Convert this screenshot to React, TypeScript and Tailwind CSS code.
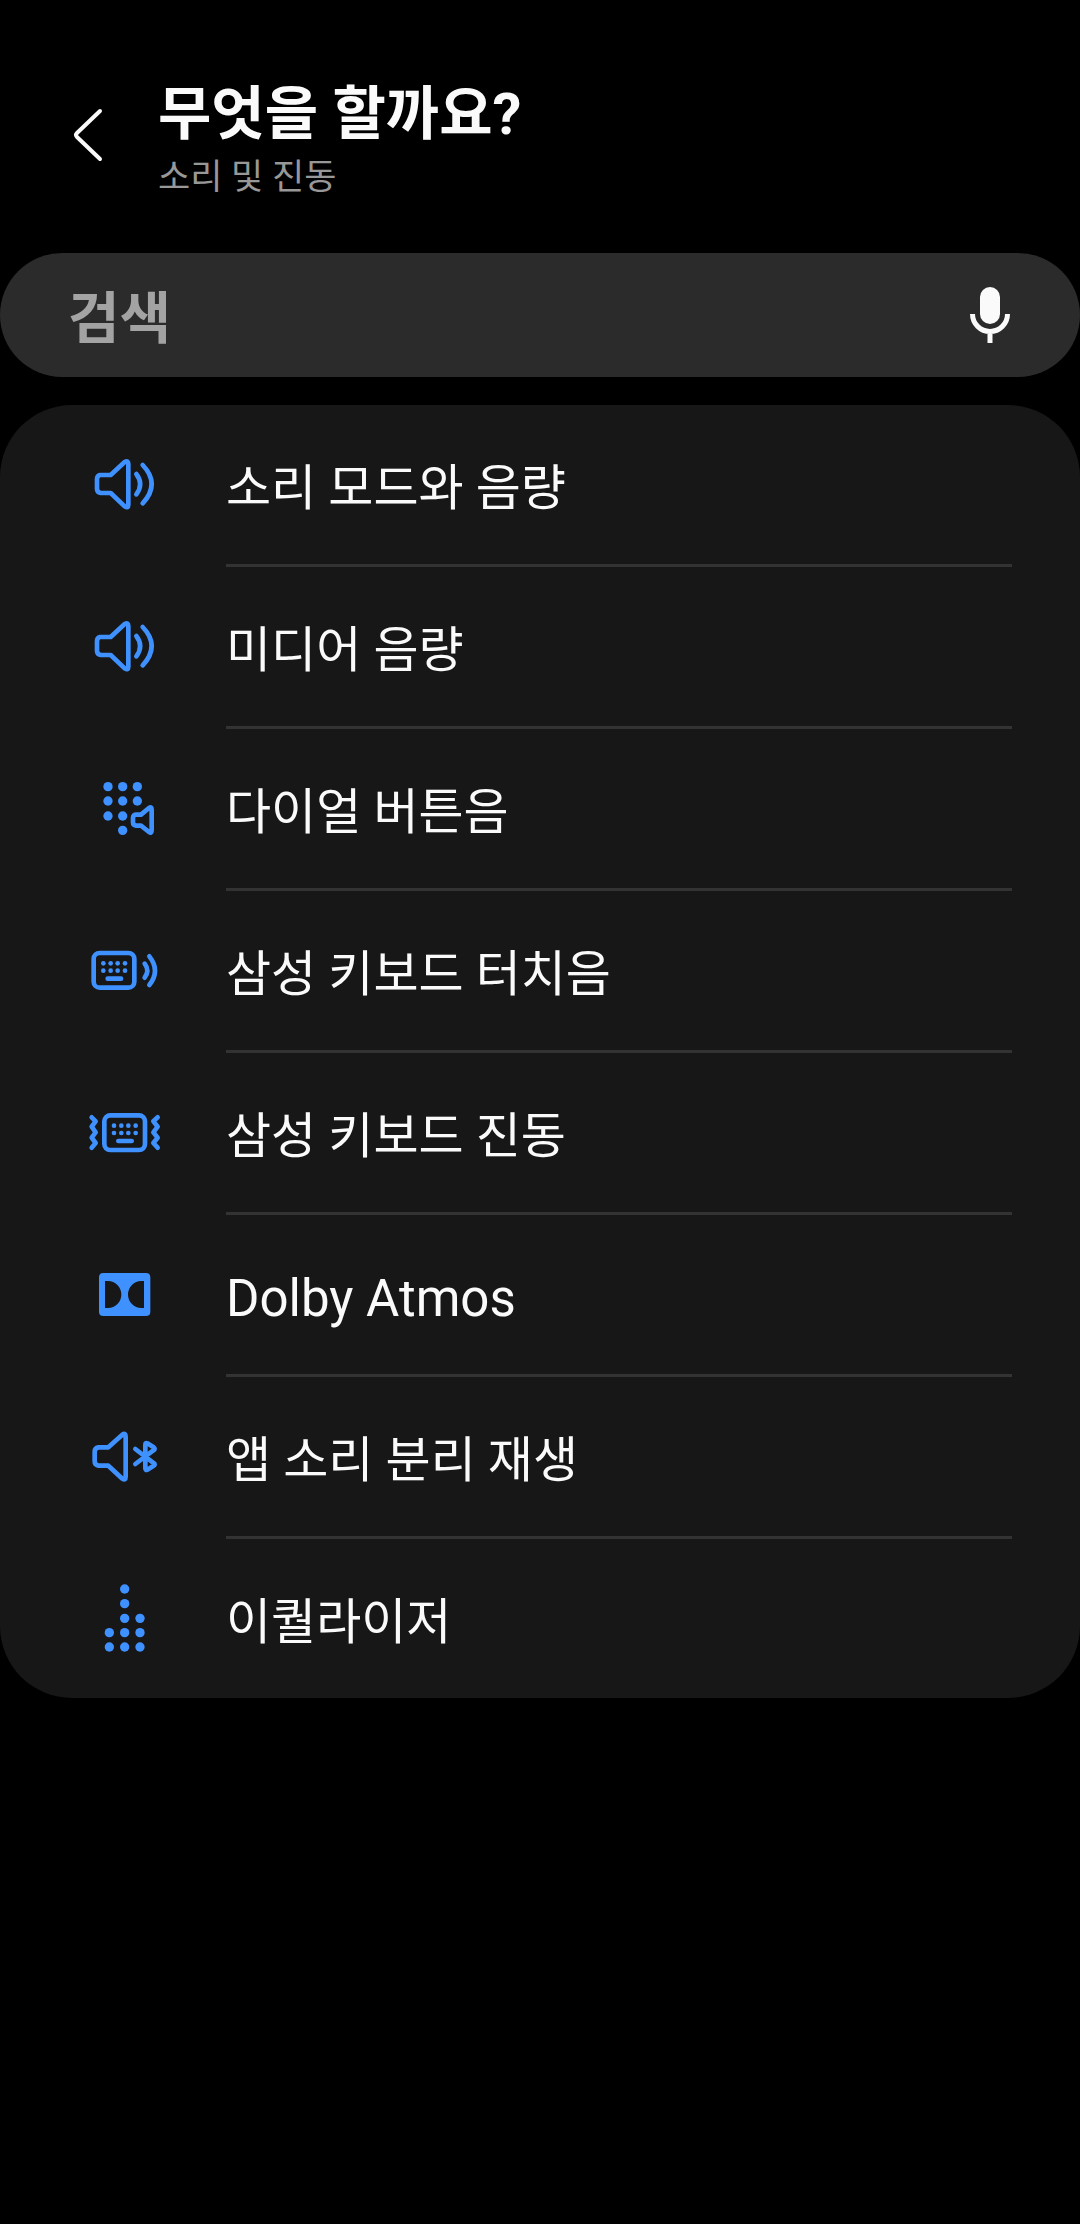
import React from "react";

interface IRow {
  label: string;
  icon: React.ReactNode;
  latin?: boolean;
}

interface IIconProps {
  viewBox: string;
  children: React.ReactNode;
}

function RowIcon({ viewBox, children }: IIconProps) {
  return (
    <svg
      viewBox={viewBox}
      className="h-[90px] w-[100px] text-[#3e91ff]"
      fill="none"
      stroke="currentColor"
      strokeWidth="14"
      strokeLinecap="round"
      strokeLinejoin="round"
      aria-hidden="true"
    >
      {children}
    </svg>
  );
}

function Dots({ points, r }: { points: number[][]; r: number }) {
  return (
    <g fill="currentColor" stroke="none">
      {points.map(([x, y]) => (
        <circle key={`${x}-${y}`} cx={x} cy={y} r={r} />
      ))}
    </g>
  );
}

function VolumeIcon() {
  return (
    <RowIcon viewBox="0 3 300 270">
      <path d="M60 105H92L134 66Q145 60 145 72V194Q145 206 134 199L92 159H62Q51 157 51 146V118Q51 107 60 105Z" />
      <path d="M169 102Q192 132 169 163" />
      <path d="M188 75Q242 132 188 190" />
    </RowIcon>
  );
}

function DialIcon() {
  return (
    <RowIcon viewBox="0 0 300 270">
      <Dots
        r={14}
        points={[
          [84, 65],
          [128, 65],
          [172, 65],
          [84, 108],
          [128, 108],
          [172, 108],
          [84, 153],
          [128, 153],
          [128, 196],
        ]}
      />
      <path d="M168 149H183L207 129Q215 124 215 134V196Q215 206 207 201L183 182H168Q159 181 159 172V159Q159 150 168 149Z" />
    </RowIcon>
  );
}

// shared by the sound and the vibration rows, x is the left edge of the frame
function Keyboard({ x, y }: { x: number; y: number }) {
  return (
    <g transform={`translate(${x} ${y})`}>
      <rect x="7" y="7" width="122" height="104" rx="18" />
      <Dots
        r={7}
        points={[
          [36, 38],
          [58, 38],
          [79, 38],
          [101, 38],
          [36, 60],
          [58, 60],
          [79, 60],
          [101, 60],
        ]}
      />
      <path d="M49 84H89" />
    </g>
  );
}

function KeyboardSoundIcon() {
  return (
    <RowIcon viewBox="0 -9 300 270">
      <Keyboard x={34} y={62} />
      <path d="M194 101Q210 122 194 143" />
      <path d="M208 79Q242 122 208 165" />
    </RowIcon>
  );
}

function KeyboardVibrationIcon() {
  return (
    <RowIcon viewBox="0 -3 300 270">
      <Keyboard x={66} y={69} />
      <path d="M35 82L47 94L35 110L47 127L35 143L47 159L35 173" />
      <path d="M233 82L220 94L233 110L220 127L233 143L220 159L233 173" />
    </RowIcon>
  );
}

function DolbyIcon() {
  return (
    <RowIcon viewBox="0 3 300 270">
      <path
        fill="currentColor"
        stroke="none"
        fillRule="evenodd"
        d="M70 69H198Q211 69 211 82V185Q211 198 198 198H70Q57 198 57 185V82Q57 69 70 69ZM75 93V174H84A40 40.500 0 0 0 84 93ZM192 93H184A40 40.500 0 0 0 184 174H192Z"
      />
    </RowIcon>
  );
}

function SeparateSoundIcon() {
  return (
    <RowIcon viewBox="0 9 300 270">
      <path d="M55 112H85L127 74Q137 67 137 80V200Q137 213 127 206L85 167H55Q44 165 44 154V125Q44 114 55 112Z" />
      <path d="M166 117L223 161Q225 165 221 167L202 179Q196 182 196 175V104Q196 97 202 100L221 112Q225 115 223 119L166 162" />
    </RowIcon>
  );
}

function EqualizerIcon() {
  return (
    <RowIcon viewBox="0 0 300 270">
      <Dots
        r={14}
        points={[
          [134, 42],
          [134, 86],
          [134, 130],
          [180, 130],
          [88, 173],
          [134, 173],
          [180, 173],
          [88, 216],
          [134, 216],
          [180, 216],
        ]}
      />
    </RowIcon>
  );
}

const rows: IRow[] = [
  { label: "소리 모드와 음량", icon: <VolumeIcon /> },
  { label: "미디어 음량", icon: <VolumeIcon /> },
  { label: "다이얼 버튼음", icon: <DialIcon /> },
  { label: "삼성 키보드 터치음", icon: <KeyboardSoundIcon /> },
  { label: "삼성 키보드 진동", icon: <KeyboardVibrationIcon /> },
  { label: "Dolby Atmos", icon: <DolbyIcon />, latin: true },
  { label: "앱 소리 분리 재생", icon: <SeparateSoundIcon /> },
  { label: "이퀄라이저", icon: <EqualizerIcon /> },
];

function Header() {
  return (
    <header className="flex items-start pt-[78px] pl-[60px]">
      <button
        type="button"
        aria-label="뒤로"
        className="mt-[26px] mr-[42px] shrink-0"
      >
        <svg
          viewBox="0 0 56 60"
          className="h-[60px] w-[56px]"
          fill="none"
          stroke="#fafafa"
          strokeWidth="4"
          strokeLinecap="round"
          strokeLinejoin="round"
        >
          <path d="M40 7L17 29Q15 31 17 33L40 55" />
        </svg>
      </button>
      <div>
        <h1 className="text-[58px] leading-[72px] font-bold">무엇을 할까요?</h1>
        <p className="text-[35px] leading-[56px] text-[#989898]">
          소리 및 진동
        </p>
      </div>
    </header>
  );
}

function SearchBar() {
  return (
    <div className="mt-[47px] flex h-[124px] items-center rounded-full bg-[#2b2b2b] pr-[60px] pl-[68px]">
      <input
        type="text"
        aria-label="검색"
        placeholder="검색"
        className="h-full min-w-0 flex-1 bg-transparent pt-2 text-[56px] font-bold outline-none placeholder:text-[#a3a3a3]"
      />
      <button type="button" aria-label="음성 검색" className="shrink-0">
        <svg viewBox="0 0 60 60" className="h-[60px] w-[60px]" fill="none">
          <rect x="20" y="2" width="20" height="37" rx="10" fill="#fafafa" />
          <path
            d="M12.500 29A17.500 17.500 0 0 0 47.500 29M30 46V58"
            stroke="#fafafa"
            strokeWidth="5"
          />
        </svg>
      </button>
    </div>
  );
}

function SettingRow({ label, icon, latin }: IRow) {
  return (
    <li className="group">
      <a href="#" className="flex items-start pr-[68px] pl-20">
        <span className="w-[146px] shrink-0 pt-9">{icon}</span>
        <span
          className={`flex flex-1 items-center border-b-3 border-[#333333] pt-[9px] leading-[150px] group-last:border-b-0 ${
            latin ? "text-[51px]" : "text-[49px]"
          }`}
        >
          {label}
        </span>
      </a>
    </li>
  );
}

function App() {
  return (
    <main
      lang="ko"
      className="min-h-screen bg-black font-['Roboto','Noto_Sans_CJK_KR',sans-serif] text-[#fafafa]"
    >
      <Header />
      <SearchBar />
      <ul className="mt-7 overflow-hidden rounded-[72px] bg-[#171717]">
        {rows.map((row) => (
          <SettingRow key={row.label} {...row} />
        ))}
      </ul>
    </main>
  );
}

export default App;
